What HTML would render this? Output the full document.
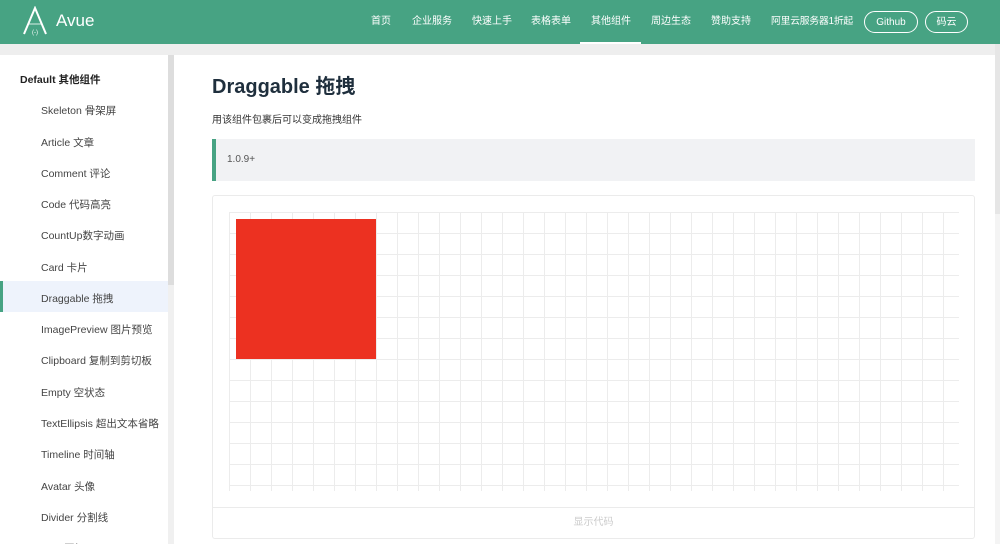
<!DOCTYPE html>
<html><head><meta charset="utf-8"><style>
*{margin:0;padding:0;box-sizing:border-box}
html{width:1000px;height:544px;overflow:hidden}
body{width:1000px;height:544px;overflow:hidden;background:#eee;font-family:"Liberation Sans","Noto Sans CJK SC",sans-serif;position:relative}
.hd{position:absolute;left:0;top:0;width:1000px;height:44px;background:#47a383}
.logo{position:absolute;left:22px;top:6px}
.brand{position:absolute;left:56px;top:11px;color:#fff;font-size:17px}
.nav{position:absolute;top:0;height:44px;color:#fff;font-size:10px;line-height:44px;white-space:nowrap}
.btn{position:absolute;top:11px;height:22px;border:1px solid #fff;border-radius:11px;color:#fff;font-size:10px;line-height:21px;text-align:center}
.side{position:absolute;left:0;top:55px;width:168px;height:489px;background:#fff;overflow:hidden}
.sb{position:absolute;left:168px;top:55px;width:6px;height:489px;background:#f0f0f0}
.sb i{position:absolute;left:0;top:0;width:6px;height:230px;background:#ddd}
.side div{position:absolute;left:41px;font-size:10.5px;color:#444;white-space:nowrap}
.main{position:absolute;left:174px;top:55px;width:821px;height:489px;background:#fff}
.rsb{position:absolute;left:995px;top:44px;width:5px;height:500px;background:#f4f4f4}
</style></head><body>
<div class="hd">
<svg class="logo" width="26" height="30" viewBox="0 0 26 30"><path d="M2 28 L13 2 L24 28" stroke="#fff" stroke-width="2" fill="none"/><path d="M7 18 H19" stroke="#fff" stroke-width="0.8"/><text x="13" y="28" font-size="6" fill="#fff" text-anchor="middle">(-)</text></svg>
<div class="brand">Avue</div>
<div class="nav" style="left:371px">首页</div>
<div class="nav" style="left:412px">企业服务</div>
<div class="nav" style="left:472px">快速上手</div>
<div class="nav" style="left:531px">表格表单</div>
<div class="nav" style="left:591px">其他组件</div>
<div style="position:absolute;left:580px;top:42px;width:61px;height:2px;background:#fff"></div>
<div class="nav" style="left:651px">周边生态</div>
<div class="nav" style="left:711px">赞助支持</div>
<div class="nav" style="left:771px;font-size:9.8px;letter-spacing:-0.2px">阿里云服务器1折起</div>
<div class="btn" style="left:864px;width:54px">Github</div>
<div class="btn" style="left:925px;width:43px">码云</div>
</div>
<div class="side">
<div style="left:20px;top:17px;font-weight:bold;color:#222">Default 其他组件</div>
<div style="top:48px">Skeleton 骨架屏</div>
<div style="top:80px">Article 文章</div>
<div style="top:111px">Comment 评论</div>
<div style="top:142px">Code 代码高亮</div>
<div style="top:173px">CountUp数字动画</div>
<div style="top:205px">Card 卡片</div>
<div style="left:0;top:226px;width:168px;height:31px;background:#eef3fc"></div>
<div style="left:0;top:226px;width:3px;height:31px;background:#47a383"></div>
<div style="top:236px">Draggable 拖拽</div>
<div style="top:267px">ImagePreview 图片预览</div>
<div style="top:298px">Clipboard 复制到剪切板</div>
<div style="top:330px">Empty 空状态</div>
<div style="top:361px">TextEllipsis 超出文本省略</div>
<div style="top:392px">Timeline 时间轴</div>
<div style="top:424px">Avatar 头像</div>
<div style="top:455px">Divider 分割线</div>
<div style="top:486px">Affix 图钉</div>
</div>
<div class="sb"><i></i></div>
<div class="main">
<div style="position:absolute;left:38px;top:15px;font-size:20px;font-weight:bold;color:#1f2f3d">Draggable 拖拽</div>
<div style="position:absolute;left:38px;top:56px;font-size:10px;color:#333">用该组件包裹后可以变成拖拽组件</div>
<div style="position:absolute;left:38px;top:84px;width:763px;height:42px;background:#f1f2f4;border-left:4px solid #47a383;font-size:10px;color:#555;line-height:42px;padding-left:11px">1.0.9+</div>
<div style="position:absolute;left:38px;top:140px;width:763px;height:344px;border:1px solid #ebebeb;border-radius:3px">
<div style="position:absolute;left:16px;top:16px;width:730px;height:279px;background-image:linear-gradient(#ececec 1px,transparent 1px),linear-gradient(90deg,#ececec 1px,transparent 1px);background-size:21px 21px"></div>
<div style="position:absolute;left:23px;top:23px;width:140px;height:140px;background:#ec3121"></div>
<div style="position:absolute;left:0;top:311px;width:761px;border-top:1px solid #ebebeb;height:31px;text-align:center;font-size:10px;color:#ccc;line-height:29px">显示代码</div>
</div>
</div>
<div class="rsb"><div style="position:absolute;top:0;width:5px;height:170px;background:#e6e6e6"></div></div>
</body></html>
